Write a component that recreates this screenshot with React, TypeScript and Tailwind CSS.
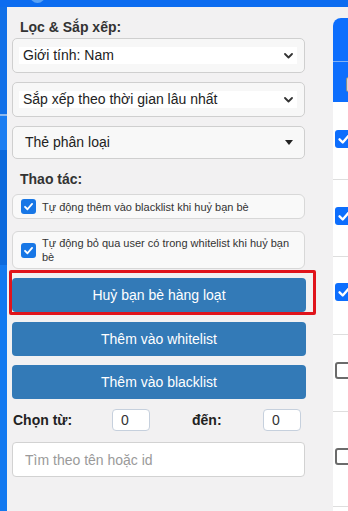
import React from "react";

const FONT = { fontFamily: '"Liberation Sans", Arial, sans-serif' };

function Chevron() {
  return (
    <svg width="9" height="6" viewBox="0 0 9 6" className="shrink-0">
      <path d="M1 1 L4.5 4.5 L8 1" fill="none" stroke="#333" strokeWidth="1.8" strokeLinecap="round" strokeLinejoin="round" />
    </svg>
  );
}

function BlueCheck({ size = 15, color = "#1877e6" }: { size?: number; color?: string }) {
  return (
    <span
      className="flex shrink-0 items-center justify-center rounded-[3px]"
      style={{ width: size, height: size, backgroundColor: color }}
    >
      <svg width={size - 4} height={size - 4} viewBox="0 0 12 12">
        <path d="M2.2 6.3 L4.9 9 L9.9 3.2" fill="none" stroke="#fff" strokeWidth="2" strokeLinecap="round" strokeLinejoin="round" />
      </svg>
    </span>
  );
}

function NativeSelect({ label }: { label: string }) {
  return (
    <div className="h-[35px] w-[293px] rounded-[5px] border border-[#cfcfcf] bg-[#f7f7f7] pl-[6px] pr-[7px] pt-[8px]">
      <div className="flex h-[17px] items-center bg-white pl-[4px] pr-[4px] text-[14px] leading-[17px] text-[#222]">
        <span className="flex-1">{label}</span>
        <Chevron />
      </div>
    </div>
  );
}

function CheckRow({ label, tall = false }: { label: string; tall?: boolean }) {
  return (
    <div
      className={`flex w-[293px] items-center rounded-[6px] border border-[#d8d8d8] bg-[#f9f9f9] pl-[8px] pr-[6px] ${
        tall ? "h-[38px]" : "h-[25px]"
      }`}
    >
      <BlueCheck />
      <span className="ml-[6px] w-[256px] text-[11px] leading-[14px] text-[#333]">{label}</span>
    </div>
  );
}

function ActionButton({ label }: { label: string }) {
  return (
    <button className="flex h-[34px] w-[294px] items-center justify-center rounded-[4px] bg-[#337ab7] text-[14px] text-white">
      {label}
    </button>
  );
}

function SideCheck({ kind, top }: { kind: "blue" | "empty"; top: string }) {
  return (
    <div className={`ml-[2px] ${top}`}>
      {kind === "blue" ? (
        <BlueCheck size={18} color="#0d6efd" />
      ) : (
        <span className="block h-[17px] w-[17px] rounded-[3px] border-2 border-[#6b6b6b] bg-white" />
      )}
    </div>
  );
}

export default function App() {
  return (
    <div className="relative flex h-[511px] w-[348px] flex-col overflow-hidden bg-[#0d6ff0]" style={FONT}>
      {/* top bar */}
      <div className="relative h-[7px] shrink-0 bg-[#0c6cf0]">
        <div className="absolute left-[30px] top-[-12px] h-[15px] w-[15px] rounded-full bg-[#5aa2f5]" />
      </div>

      <div className="flex flex-1">
        {/* left strip */}
        <div className="flex w-[7px] shrink-0 flex-col">
          <div className="h-[107px] bg-[#1170e8]" />
          <div className="h-[2px] bg-[#8db8ee]" />
          <div className="h-[34px] bg-[#1a7df2]" />
          <div className="h-[115px] bg-[#0b69dc]" />
          <div className="flex-1 bg-[#1279f0]" />
        </div>

        {/* filter panel */}
        <div className="w-[326px] shrink-0 bg-[#f2f1f2] pl-[5px] pt-[10px]">
          <div className="h-[21px] pl-[8px] text-[14px] font-bold leading-[21px] text-[#333]">Lọc &amp; Sắp xếp:</div>

          <NativeSelect label="Giới tính: Nam" />
          <div className="mt-[9px]">
            <NativeSelect label="Sắp xếp theo thời gian lâu nhất" />
          </div>

          <div className="mt-[9px] flex h-[33px] w-[293px] items-center rounded-[5px] border border-[#cfcfcf] bg-[#f8f8f8] pl-[12px] pr-[11px] text-[14px] text-[#222]">
            <span className="flex-1">Thẻ phân loại</span>
            <svg width="8" height="5" viewBox="0 0 8 5">
              <path d="M0 0 H8 L4 5 Z" fill="#222" />
            </svg>
          </div>

          <div className="mt-[10px] h-[20px] pl-[8px] text-[14px] font-bold leading-[20px] text-[#333]">Thao tác:</div>

          <div className="mt-[5px]">
            <CheckRow label="Tự động thêm vào blacklist khi huỷ bạn bè" />
          </div>
          <div className="mt-[12px]">
            <CheckRow label="Tự động bỏ qua user có trong whitelist khi huỷ bạn bè" tall />
          </div>

          <div className="relative mt-[9px]">
            <ActionButton label="Huỷ bạn bè hàng loạt" />
            <div className="pointer-events-none absolute bottom-[-3px] left-[-3px] right-[17px] top-[-8px] rounded-[2px] border-[3px] border-[#e0141c]" />
          </div>
          <div className="mt-[10px]">
            <ActionButton label="Thêm vào whitelist" />
          </div>
          <div className="mt-[9px]">
            <ActionButton label="Thêm vào blacklist" />
          </div>

          <div className="mt-[10px] flex h-[22px] items-center text-[14px] font-bold text-[#222]">
            <span className="w-[100px] pl-[1px]">Chọn từ:</span>
            <input
              readOnly
              value="0"
              className="h-[22px] w-[38px] rounded-[4px] border border-[#c6d0dd] bg-white pl-[8px] text-[14px] font-normal text-[#333] outline-none"
            />
            <span className="ml-[42px] w-[71px]">đến:</span>
            <input
              readOnly
              value="0"
              className="h-[22px] w-[38px] rounded-[4px] border border-[#c6d0dd] bg-white pl-[8px] text-[14px] font-normal text-[#333] outline-none"
            />
          </div>

          <input
            placeholder="Tìm theo tên hoặc id"
            className="mt-[11px] h-[35px] w-[293px] rounded-[4px] border border-[#d2d2d2] bg-white pl-[12px] text-[14px] text-[#333] outline-none placeholder:text-[#9a9a9a]"
          />
        </div>

        {/* right list card */}
        <div className="flex-1 bg-[#f2f1f2] pt-[11px]">
          <div className="flex h-full flex-col overflow-hidden rounded-tl-[8px] bg-white">
            <div className="h-[43px] shrink-0 bg-[#0d6efd]" />
            <div className="h-[1px] shrink-0 bg-[#7fb1f7]" />
            <div className="flex h-[40px] shrink-0 items-start bg-[#0d6efd] pl-[13px] pt-[15px]">
              <span className="block h-[15px] w-[15px] rounded-[2px] border border-[#8a8a8a] bg-[#d4d4d4]" />
            </div>
            <div className="h-[78px] shrink-0 border-b border-[#dedede]">
              <SideCheck kind="blue" top="mt-[28px]" />
            </div>
            <div className="h-[77px] shrink-0 border-b border-[#dedede]">
              <SideCheck kind="blue" top="mt-[27px]" />
            </div>
            <div className="h-[78px] shrink-0 border-b border-[#dedede]">
              <SideCheck kind="blue" top="mt-[26px]" />
            </div>
            <div className="h-[77px] shrink-0 border-b border-[#dedede]">
              <SideCheck kind="empty" top="mt-[27px]" />
            </div>
            <div className="h-[95px] shrink-0 border-b border-[#dedede]">
              <SideCheck kind="empty" top="mt-[36px]" />
            </div>
          </div>
        </div>
      </div>
    </div>
  );
}
